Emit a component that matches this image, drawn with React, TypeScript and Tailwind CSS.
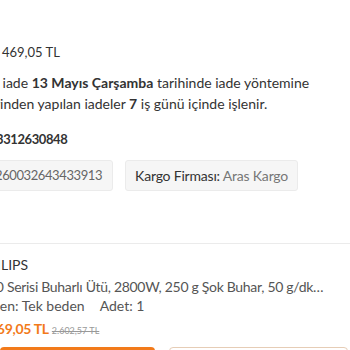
export default function App() {
  return (
    <div className="h-[350px] w-[350px] overflow-hidden bg-white font-['Lato',sans-serif] text-[#333]">
      <div className="flex flex-col pt-[44px]">
        <p className="ml-[2px] whitespace-nowrap text-[13px] leading-[16px]">469,05 TL</p>

        <div className="mt-[12px] text-[14px] leading-[21px]">
          <p className="-ml-[8px] whitespace-nowrap">
            a iade <span className="font-bold">13 Mayıs Çarşamba</span> tarihinde iade yöntemine
          </p>
          <p className="-ml-[5px] whitespace-nowrap">
            rinden yapılan iadeler <span className="font-bold">7</span> iş günü içinde işlenir.
          </p>
        </div>

        <p className="mt-[16px] -ml-[4px] whitespace-nowrap text-[13px] font-bold leading-[18px] tracking-[-0.4px]">
          3312630848
        </p>

        <div className="mt-[12px] flex gap-[12px] -ml-[16px]">
          <div className="rounded-[3px] border border-[#ebebeb] bg-[#f6f6f6] px-[10px] py-[5px] text-[13px] leading-[19px] tracking-[-0.4px] text-[#666]">
            260032643433913
          </div>
          <div className="rounded-[3px] border border-[#ebebeb] bg-[#f6f6f6] px-[9px] py-[5px] text-[14px] leading-[19px] tracking-[-0.2px]">
            <span className="text-[#333]">Kargo Firması: </span>
            <span className="text-[#777]">Aras Kargo</span>
          </div>
        </div>

        <div className="mt-[52px] h-px w-full bg-[#ebebeb]" />

        <div className="mt-[12px] flex flex-col">
          <p className="-ml-[22px] whitespace-nowrap text-[14px] leading-[17px]">PHILIPS</p>
          <p className="mt-[4px] -ml-[12px] whitespace-nowrap text-[14px] leading-[19px] tracking-[-0.3px] text-[#555]">
            00 Serisi Buharlı Ütü, 2800W, 250 g Şok Buhar, 50 g/dk…
          </p>
          <div className="mt-[0px] -ml-[8px] flex gap-[15px] whitespace-nowrap text-[14px] leading-[19px] text-[#555]">
            <span>den: Tek beden</span>
            <span>Adet: 1</span>
          </div>
          <div className="mt-[4px] -ml-[11px] flex items-baseline gap-[3px] whitespace-nowrap">
            <span className="text-[14px] font-bold leading-[19px] tracking-[-0.3px] text-[#f27a1a]">469,05 TL</span>
            <span className="text-[9px] leading-[12px] text-[#999] line-through">2.602,57 TL</span>
          </div>
        </div>

        <div className="mt-[9px] flex gap-[14px]">
          <div className="h-[30px] w-[155px] rounded-[4px] bg-[#f27a1a]" />
          <div className="h-[30px] w-[179px] rounded-[4px] border border-[#e6cdb6] bg-white" />
        </div>
      </div>
    </div>
  )
}
